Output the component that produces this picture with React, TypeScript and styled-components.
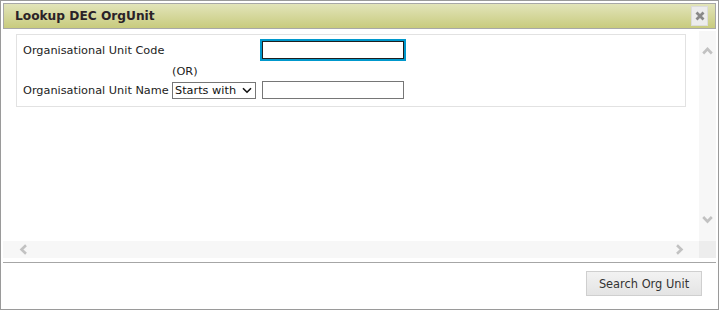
import styled, { createGlobalStyle } from 'styled-components'

const GlobalStyle = createGlobalStyle`
  body {
    margin: 0;
    background: #fff;
    font-family: 'DejaVu Sans', Verdana, sans-serif;
  }
`

const Dialog = styled.div`
  box-sizing: border-box;
  width: 719px;
  height: 310px;
  border: 1px solid #9a9a9a;
  padding: 2px 2px 0 2px;
  display: flex;
  flex-direction: column;
  background: #fff;
`

const TitleBar = styled.div`
  box-sizing: border-box;
  height: 26px;
  border: 1px solid #a8a8a8;
  background: linear-gradient(#e2e4ba, #c8cb7e);
  display: flex;
  align-items: center;
  justify-content: space-between;
  padding: 0 7px 0 11px;

  h1 {
    margin: 0;
    font-size: 12.2px;
    font-weight: bold;
    color: #2a2228;
  }
`

const CloseButton = styled.button`
  box-sizing: border-box;
  width: 17px;
  height: 20px;
  padding: 0;
  border: 1px solid #dcdcdc;
  background: #ececec;
  display: flex;
  align-items: center;
  justify-content: center;
`

const ScrollArea = styled.div`
  margin-top: 2px;
  height: 227px;
  display: grid;
  grid-template-columns: 1fr 17px;
  grid-template-rows: 1fr 17px;
`

const Content = styled.div`
  padding: 3px 13px 0 13px;
`

const ScrollTrack = styled.div<{ $vertical?: boolean }>`
  background: #f7f7f7;
  display: flex;
  flex-direction: ${p => (p.$vertical ? 'column' : 'row')};
  justify-content: space-between;
  align-items: center;
  padding: ${p => (p.$vertical ? '15px 0 17px' : '0 15px 0 16px')};
`

const ScrollCorner = styled.div`
  background: #ededed;
`

const FieldBox = styled.div`
  border: 1px solid #e2e2e2;
  padding: 4px 6px 7px;
  display: grid;
  grid-template-columns: 149px 90px 146px;
  grid-template-rows: 22px 20px 18px;
  align-items: center;
  font-size: 11.3px;
  color: #222;
`

const Label = styled.span<{ $span?: number }>`
  grid-column: span ${p => p.$span ?? 1};
  white-space: nowrap;
`

const TextInput = styled.input<{ $focused?: boolean }>`
  box-sizing: border-box;
  width: 142px;
  height: 18px;
  margin: 0;
  border: 1px solid ${p => (p.$focused ? '#1e1e1e' : '#767676')};
  outline: ${p => (p.$focused ? '2px solid #0098cc' : 'none')};
  padding: 0 3px;
  font: inherit;
`

const SelectBox = styled.div`
  box-sizing: border-box;
  width: 84px;
  height: 17px;
  border: 1px solid #767676;
  display: flex;
  align-items: center;
  padding: 0 3px 0 2px;

  select {
    appearance: none;
    border: none;
    background: transparent;
    padding: 0;
    font: inherit;
    color: #111;
    flex: 1;
    min-width: 0;
    outline: none;
  }
`

const Separator = styled.hr`
  margin: 4px 0 0;
  border: none;
  border-top: 1px solid #a6a6a6;
`

const Footer = styled.div`
  display: flex;
  justify-content: flex-end;
  padding: 8px 14px 0 0;
`

const ActionButton = styled.button`
  box-sizing: border-box;
  width: 116px;
  height: 25px;
  border: 1px solid #cfcfcf;
  background: linear-gradient(#f2f2f2, #e4e4e4);
  color: #333;
  font-family: 'DejaVu Sans', Verdana, sans-serif;
  font-size: 11.4px;
  padding: 0;
`

const Chevron = ({ dir }: { dir: 'up' | 'down' | 'left' | 'right' }) => {
  const paths = {
    up: 'M1.2 7.5 L5.5 3 L9.8 7.5',
    down: 'M1.2 2 L5.5 6.5 L9.8 2',
    left: 'M7 1.2 L2.5 5.5 L7 9.8',
    right: 'M2 1.2 L6.5 5.5 L2 9.8',
  }
  const vertical = dir === 'up' || dir === 'down'
  return (
    <svg width={vertical ? 11 : 9} height={vertical ? 9 : 11} viewBox={vertical ? '0 0 11 9' : '0 0 9 11'}>
      <path d={paths[dir]} fill="none" stroke="#c2c2c2" strokeWidth="2.6" />
    </svg>
  )
}

export default function App() {
  return (
    <>
      <GlobalStyle />
      <Dialog>
        <TitleBar>
          <h1>Lookup DEC OrgUnit</h1>
          <CloseButton aria-label="close">
            <svg width="10" height="10" viewBox="0 0 10 10">
              <path d="M1.5 1.5 L8.5 8.5 M8.5 1.5 L1.5 8.5" stroke="#888" strokeWidth="2.8" />
            </svg>
          </CloseButton>
        </TitleBar>
        <ScrollArea>
          <Content>
            <FieldBox>
              <Label $span={2}>Organisational Unit Code</Label>
              <TextInput $focused />
              <span />
              <Label>(OR)</Label>
              <span />
              <Label>Organisational Unit Name</Label>
              <SelectBox>
                <select defaultValue="starts">
                  <option value="starts">Starts with</option>
                  <option value="contains">Contains</option>
                </select>
                <svg width="10" height="7" viewBox="0 0 10 7">
                  <path d="M1 1.2 L5 5.2 L9 1.2" fill="none" stroke="#111" strokeWidth="1.6" />
                </svg>
              </SelectBox>
              <TextInput />
            </FieldBox>
          </Content>
          <ScrollTrack $vertical>
            <Chevron dir="up" />
            <Chevron dir="down" />
          </ScrollTrack>
          <ScrollTrack>
            <Chevron dir="left" />
            <Chevron dir="right" />
          </ScrollTrack>
          <ScrollCorner />
        </ScrollArea>
        <Separator />
        <Footer>
          <ActionButton>Search Org Unit</ActionButton>
        </Footer>
      </Dialog>
    </>
  )
}
